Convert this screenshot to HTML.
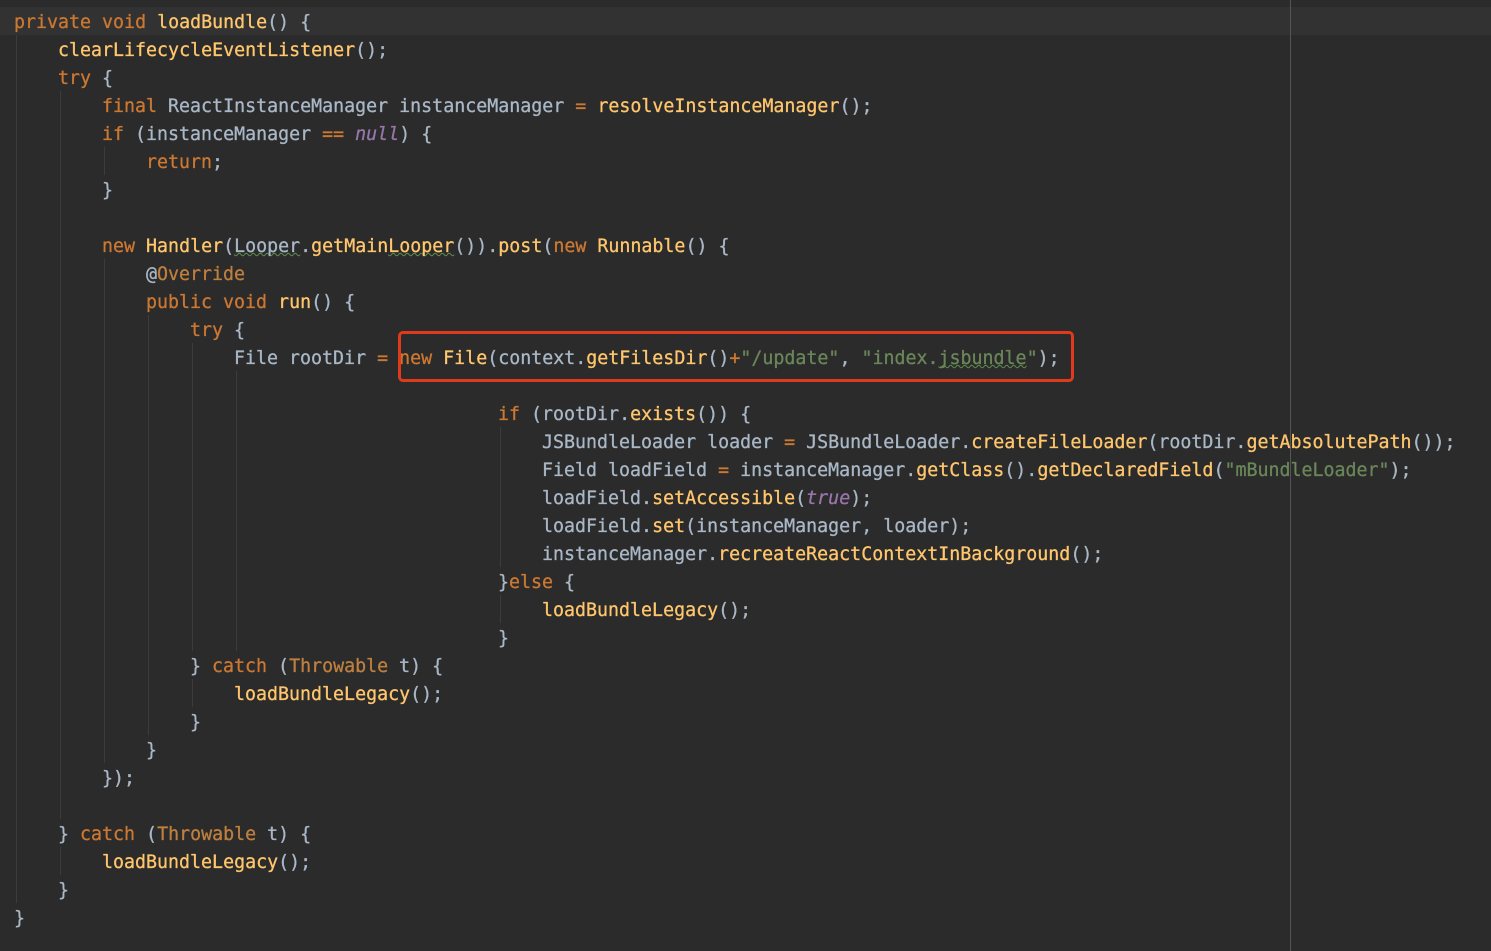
<!DOCTYPE html>
<html>
<head>
<meta charset="utf-8">
<style>
html,body{margin:0;padding:0;width:1491px;height:951px;overflow:hidden;background:#2b2b2b}
.l{position:absolute;height:28px;line-height:28px;margin-top:2px;white-space:pre;font-family:"DejaVu Sans Mono","Liberation Mono",monospace;font-size:18.29px;color:#a9b7c6;font-weight:400;-webkit-text-stroke:0.3px currentColor}
.k{color:#cc7832}
.m{color:#ffc66d}
.s{color:#6a8759}
.c{color:#9876aa;font-style:italic}
.a{color:#bf7f3f}
.w{text-decoration:underline wavy #5f8f4e 1px;text-underline-offset:0px;text-decoration-skip-ink:none}
.g{position:absolute;width:1px;background:#3c3c3c}
#cur{position:absolute;left:0;top:7px;width:1491px;height:28px;background:#323232}
#mar{position:absolute;left:1290px;top:0;width:1px;height:951px;background:#555}
#box{position:absolute;left:397.5px;top:331px;width:670.5px;height:45px;border:3px solid #e03a1c;border-radius:5px}
</style>
</head>
<body>
<div id="cur"></div>
<div id="mar"></div>
<div class="g" style="left:16px;top:35px;height:868px"></div>
<div class="g" style="left:60px;top:91px;height:728px"></div>
<div class="g" style="left:60px;top:847px;height:28px"></div>
<div class="g" style="left:104px;top:147px;height:28px"></div>
<div class="g" style="left:104px;top:259px;height:504px"></div>
<div class="g" style="left:148px;top:315px;height:420px"></div>
<div class="g" style="left:192px;top:343px;height:308px"></div>
<div class="g" style="left:192px;top:679px;height:28px"></div>
<div class="g" style="left:236px;top:371px;height:280px"></div>
<div class="g" style="left:500px;top:427px;height:140px"></div>
<div class="g" style="left:500px;top:595px;height:28px"></div>

<div class="l" style="left:14px;top:7px"><span class="k">private void </span><span class="m">loadBundle</span>() {</div>
<div class="l" style="left:58px;top:35px"><span class="m">clearLifecycleEventListener</span>();</div>
<div class="l" style="left:58px;top:63px"><span class="k">try</span> {</div>
<div class="l" style="left:102px;top:91px"><span class="k">final</span> ReactInstanceManager instanceManager <span class="k">=</span> <span class="m">resolveInstanceManager</span>();</div>
<div class="l" style="left:102px;top:119px"><span class="k">if</span> (instanceManager <span class="k">==</span> <span class="c">null</span>) {</div>
<div class="l" style="left:146px;top:147px"><span class="k">return</span>;</div>
<div class="l" style="left:102px;top:175px">}</div>
<div class="l" style="left:102px;top:231px"><span class="k">new</span> <span class="m">Handler</span>(<span class="w">Looper</span>.<span class="m">getMain<span class="w">Looper</span></span>()).<span class="m">post</span>(<span class="k">new</span> <span class="m">Runnable</span>() {</div>
<div class="l" style="left:146px;top:259px">@<span class="a">Override</span></div>
<div class="l" style="left:146px;top:287px"><span class="k">public void </span><span class="m">run</span>() {</div>
<div class="l" style="left:190px;top:315px"><span class="k">try</span> {</div>
<div class="l" style="left:234px;top:343px">File rootDir <span class="k">=</span> <span class="k">new</span> <span class="m">File</span>(context.<span class="m">getFilesDir</span>()<span class="k">+</span><span class="s">"/update"</span>, <span class="s">"index.<span class="w">jsbundle</span>"</span>);</div>
<div class="l" style="left:498px;top:399px"><span class="k">if</span> (rootDir.<span class="m">exists</span>()) {</div>
<div class="l" style="left:542px;top:427px">JSBundleLoader loader <span class="k">=</span> JSBundleLoader.<span class="m">createFileLoader</span>(rootDir.<span class="m">getAbsolutePath</span>());</div>
<div class="l" style="left:542px;top:455px">Field loadField <span class="k">=</span> instanceManager.<span class="m">getClass</span>().<span class="m">getDeclaredField</span>(<span class="s">"mBundleLoader"</span>);</div>
<div class="l" style="left:542px;top:483px">loadField.<span class="m">setAccessible</span>(<span class="c">true</span>);</div>
<div class="l" style="left:542px;top:511px">loadField.<span class="m">set</span>(instanceManager, loader);</div>
<div class="l" style="left:542px;top:539px">instanceManager.<span class="m">recreateReactContextInBackground</span>();</div>
<div class="l" style="left:498px;top:567px">}<span class="k">else</span> {</div>
<div class="l" style="left:542px;top:595px"><span class="m">loadBundleLegacy</span>();</div>
<div class="l" style="left:498px;top:623px">}</div>
<div class="l" style="left:190px;top:651px">} <span class="k">catch</span> (<span class="a">Throwable</span> t) {</div>
<div class="l" style="left:234px;top:679px"><span class="m">loadBundleLegacy</span>();</div>
<div class="l" style="left:190px;top:707px">}</div>
<div class="l" style="left:146px;top:735px">}</div>
<div class="l" style="left:102px;top:763px">});</div>
<div class="l" style="left:58px;top:819px">} <span class="k">catch</span> (<span class="a">Throwable</span> t) {</div>
<div class="l" style="left:102px;top:847px"><span class="m">loadBundleLegacy</span>();</div>
<div class="l" style="left:58px;top:875px">}</div>
<div class="l" style="left:14px;top:903px">}</div>
<div id="box"></div>
</body>
</html>
